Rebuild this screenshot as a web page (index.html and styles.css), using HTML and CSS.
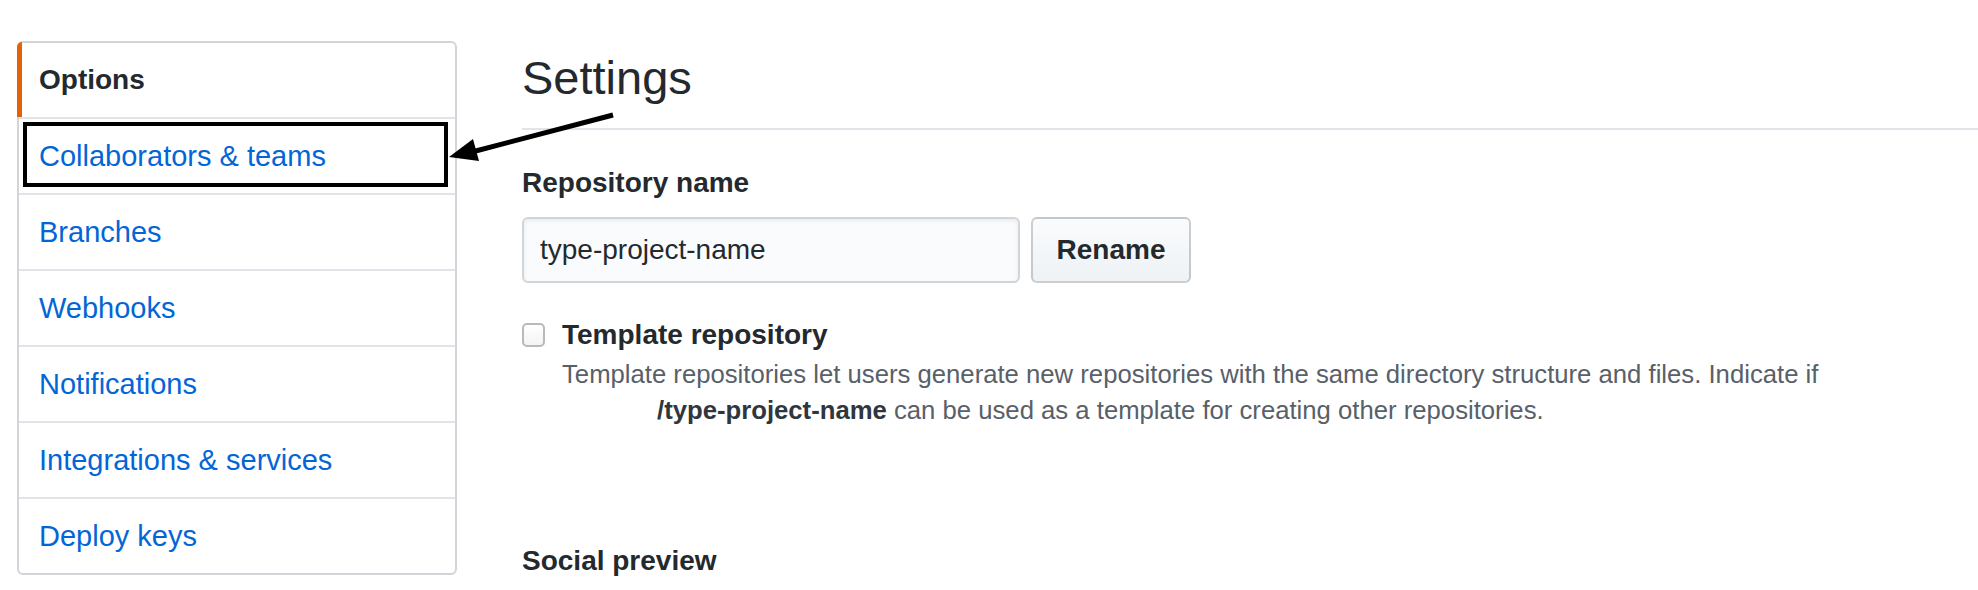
FILE: index.html
```html
<!DOCTYPE html>
<html lang="en">
<head>
<meta charset="utf-8">
<title>Settings</title>
<link rel="stylesheet" href="styles.css">
</head>
<body>
<div class="page">
  <nav class="sidebar">
    <a class="menu-item selected" href="#">Options</a>
    <a class="menu-item annotated" href="#">Collaborators &amp; teams</a>
    <a class="menu-item" href="#">Branches</a>
    <a class="menu-item" href="#">Webhooks</a>
    <a class="menu-item" href="#">Notifications</a>
    <a class="menu-item" href="#">Integrations &amp; services</a>
    <a class="menu-item" href="#">Deploy keys</a>
  </nav>
  <main class="main">
    <h2 class="subhead">Settings</h2>
    <div class="field-label">Repository name</div>
    <div class="rename-row">
      <input class="text-input" type="text" value="type-project-name">
      <button class="btn" type="button">Rename</button>
    </div>
    <div class="form-checkbox">
      <input class="checkbox" type="checkbox">
      <label class="checkbox-label">Template repository</label>
      <p class="note">Template repositories let users generate new repositories with the same directory structure and files. Indicate if<br><span class="owner"></span><strong>/type-project-name</strong> can be used as a template for creating other repositories.</p>
    </div>
    <div class="section-label">Social preview</div>
  </main>
  <svg class="arrow" width="1978" height="590" viewBox="0 0 1978 590" xmlns="http://www.w3.org/2000/svg">
    <line x1="613" y1="115" x2="468" y2="153" stroke="#000" stroke-width="5"/>
    <polygon points="449,157 479,161 473,139" fill="#000"/>
  </svg>
</div>
</body>
</html>
```
FILE: styles.css
```css
html, body {
  margin: 0;
  padding: 0;
  background: #ffffff;
}

body {
  font-family: "Liberation Sans", Arial, sans-serif;
  color: #24292e;
  overflow: hidden;
}

.page {
  position: relative;
  display: flex;
  align-items: flex-start;
  padding-left: 17px;
  height: 590px;
  box-sizing: border-box;
}

.sidebar {
  margin-top: 41px;
  width: 440px;
  flex: 0 0 440px;
  box-sizing: border-box;
  border: 2px solid #d1d5da;
  border-radius: 6px;
}

.menu-item {
  display: block;
  position: relative;
  height: 74px;
  line-height: 74px;
  padding-left: 20px;
  font-size: 29px;
  color: #0366d6;
  text-decoration: none;
  border-top: 2px solid #e1e4e8;
}

.menu-item:first-child {
  border-top: 0;
}

.menu-item.selected {
  font-size: 28px;
  font-weight: bold;
  color: #24292e;
}

.menu-item.selected::before {
  content: "";
  position: absolute;
  left: -2px;
  top: -1px;
  bottom: 0;
  width: 5px;
  background: #e36209;
  border-top-left-radius: 5px;
}

.menu-item.annotated::after {
  content: "";
  position: absolute;
  left: 4px;
  right: 7px;
  top: 3px;
  bottom: 6px;
  border: 4px solid #000000;
}

.main {
  flex: 1;
  margin-left: 65px;
  margin-top: 48px;
}

.subhead {
  margin: 0;
  font-size: 47px;
  font-weight: normal;
  line-height: 60px;
  padding-bottom: 20px;
  border-bottom: 2px solid #e1e4e8;
  color: #24292e;
}

.field-label {
  margin-top: 35px;
  font-size: 28px;
  font-weight: bold;
  line-height: 36px;
}

.rename-row {
  display: flex;
  gap: 11px;
  margin-top: 16px;
}

.text-input {
  width: 498px;
  height: 66px;
  box-sizing: border-box;
  margin: 0;
  padding: 0 16px;
  border: 2px solid #d1d5da;
  border-radius: 6px;
  background: #fafbfc;
  box-shadow: inset 0 2px 4px rgba(27, 31, 35, 0.075);
  font-family: "Liberation Sans", Arial, sans-serif;
  font-size: 28px;
  color: #24292e;
  outline: none;
}

.btn {
  width: 160px;
  height: 66px;
  box-sizing: border-box;
  margin: 0;
  padding: 0;
  border: 2px solid rgba(27, 31, 35, 0.2);
  border-radius: 6px;
  background: linear-gradient(180deg, #fafbfc 0%, #eff3f6 90%);
  font-family: "Liberation Sans", Arial, sans-serif;
  font-size: 28px;
  font-weight: bold;
  color: #24292e;
}

.form-checkbox {
  display: grid;
  grid-template-columns: 23px 1fr;
  column-gap: 17px;
  align-items: center;
  margin-top: 34px;
}

.checkbox {
  appearance: none;
  -webkit-appearance: none;
  grid-column: 1;
  grid-row: 1;
  width: 23px;
  height: 24px;
  margin: 0;
  box-sizing: border-box;
  border: 2px solid #b9b9b9;
  border-radius: 5px;
  background: linear-gradient(180deg, #ffffff, #f4f4f4);
}

.checkbox-label {
  grid-column: 2;
  grid-row: 1;
  font-size: 28px;
  font-weight: bold;
  line-height: 36px;
}

.note {
  grid-column: 2;
  grid-row: 2;
  margin: 3px 0 0;
  font-size: 25.7px;
  line-height: 36px;
  color: #586069;
}

.note strong {
  color: #2f363d;
}

.owner {
  display: inline-block;
  width: 95px;
}

.section-label {
  margin-top: 115px;
  font-size: 28px;
  font-weight: bold;
  line-height: 36px;
}

.arrow {
  position: absolute;
  left: 0;
  top: 0;
  pointer-events: none;
}
```
